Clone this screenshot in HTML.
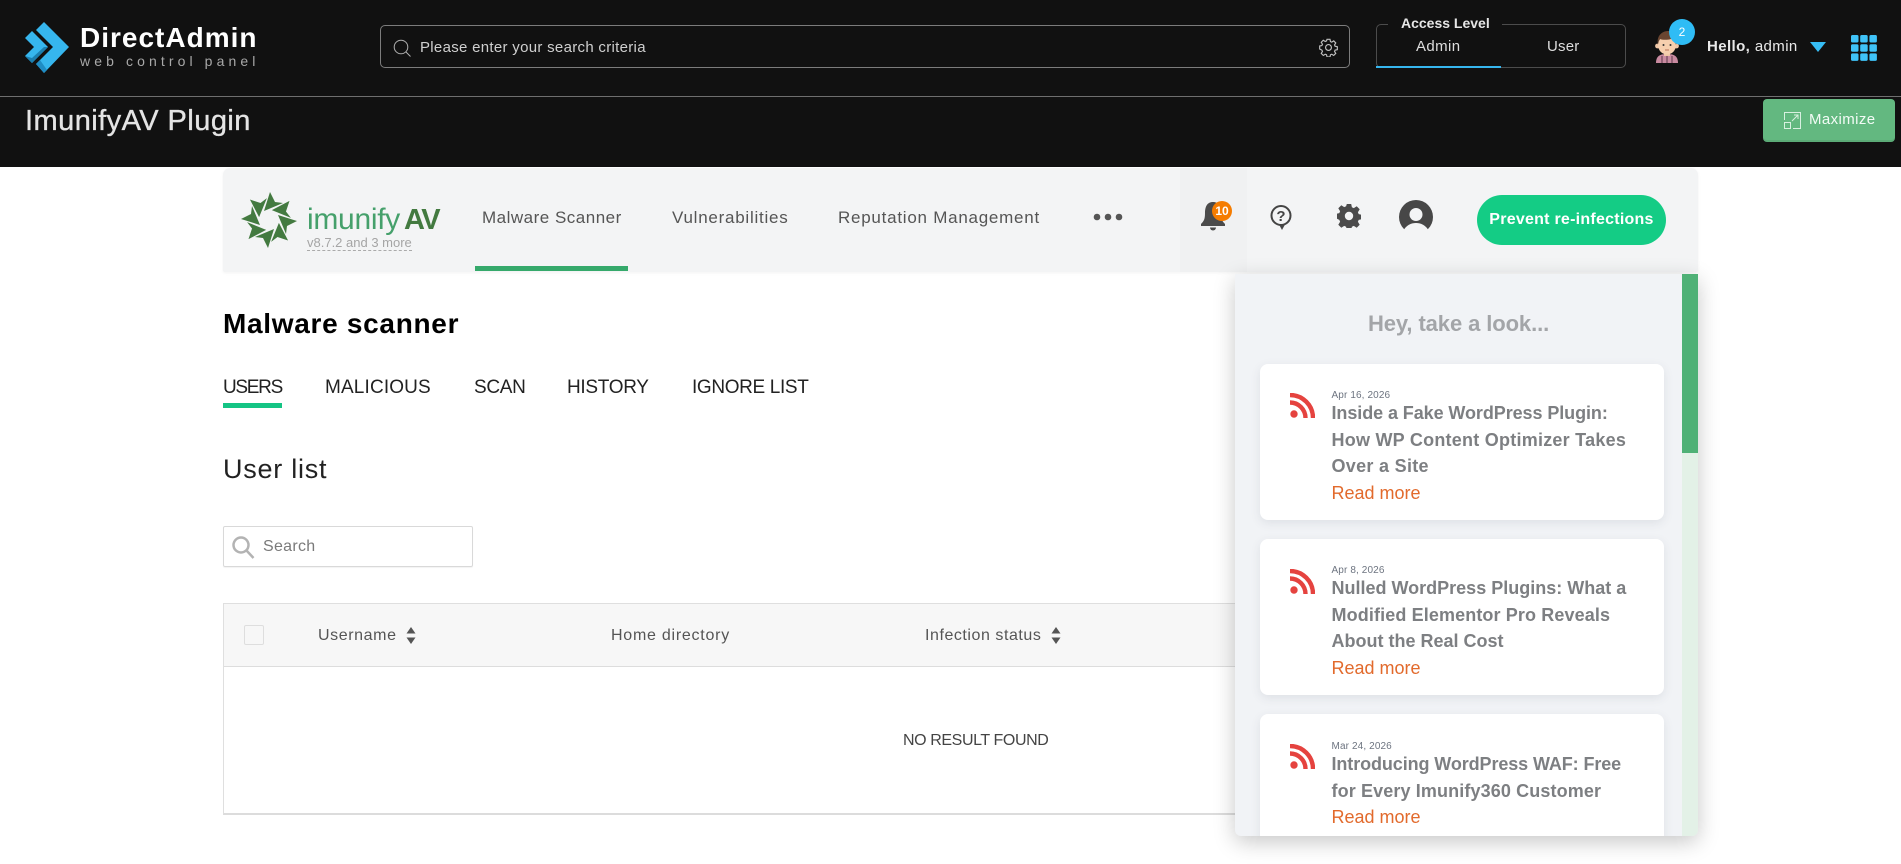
<!DOCTYPE html>
<html lang="en"><head><meta charset="utf-8"><title>ImunifyAV Plugin</title>
<style>
html,body{margin:0;padding:0;width:1901px;height:864px;overflow:hidden;background:#fff;font-family:"Liberation Sans",Arial,sans-serif}
*{box-sizing:border-box}
.a{position:absolute}
.t{position:absolute;white-space:nowrap;line-height:20px;height:20px}
svg{position:absolute;display:block}
.card{position:absolute;left:25px;width:404px;background:#fff;border-radius:8px;box-shadow:0 3px 10px rgba(60,70,90,.1)}
.d{position:absolute;left:71.500px;font-size:10px;line-height:12px;color:#6d7480;white-space:nowrap;letter-spacing:.12px}
.h{position:absolute;left:71.500px;font-size:18px;line-height:26.6px;font-weight:bold;color:#7d7f82;white-space:nowrap}
.r{position:absolute;left:71.500px;font-size:18px;line-height:26px;color:#e26a2c;white-space:nowrap}
.tb{font-size:19px;color:#222;top:378px}
.th{font-size:16px;color:#555;top:626px}
.n{font-size:17px;color:#555;top:208px}
</style></head>
<body>
<div class="a" style="left:0;top:0;width:1901px;height:167px;background:#111"></div>
<div class="a" style="left:0;top:96px;width:1901px;height:1px;background:#6f6f6f"></div>

<svg style="left:20px;top:17px" width="54" height="60" viewBox="20 17 54 60">
<polygon points="25,38 32,31 48,47 32,63 25,56 34,47" fill="#36b6ee"/>
<polygon points="25,56 32,63 48,47 44,47 32,58" fill="#1b7fb0"/>
<polygon points="44,22 69,47 44,73 36,64 53,47 36,30" fill="#36b6ee"/>
<polygon points="36,64 44,73 47,70 40,60" fill="#1f8cc4"/>
</svg>
<div class="t" style="left:80px;top:28px;font-size:28px;font-weight:bold;color:#fff;letter-spacing:1px">DirectAdmin</div>
<div class="t" style="left:80px;top:51px;font-size:14px;color:#a8a8a8;letter-spacing:4.100px">web control panel</div>

<div class="a" style="left:380px;top:25px;width:970px;height:43px;border:1px solid #7c7c7c;border-radius:5px"></div>
<svg style="left:392px;top:38px" width="20" height="20" viewBox="0 0 20 20" fill="none" stroke="#b0b0b0" stroke-width="1"><circle cx="9" cy="9" r="6.800"/><path d="M14 14l4.500 4.500"/></svg>
<div class="t" style="left:420px;top:38px;font-size:15px;color:#cfcfcf;letter-spacing:.3px">Please enter your search criteria</div>
<svg style="left:1319px;top:38px" width="19" height="19" viewBox="-2 -2 28 28"><path fill="none" stroke="#c0c0c0" stroke-width="1.700" d="M9.800 0h4.400l.7 3.300 1.900.8L19.700 2.300l3 3-1.800 2.900.8 1.900 3.300.7v4.400l-3.300.7-.8 1.900 1.800 2.900-3 3-2.900-1.800-1.900.8-.7 3.300H9.800l-.7-3.300-1.900-.8-2.900 1.800-3-3 1.800-2.900-.8-1.900L-1 14.200V9.800l3.300-.7.8-1.900L1.300 4.300l3-3 2.900 1.800 1.900-.8z"/><circle cx="12" cy="12" r="4.300" fill="none" stroke="#c0c0c0" stroke-width="1.700"/></svg>

<div class="a" style="left:1376px;top:24px;width:250px;height:44px;border:1px solid #4c4c4c;border-radius:5px"></div>
<div class="a" style="left:1388px;top:20px;width:114px;height:8px;background:#111"></div>
<div class="t" style="left:1401px;top:13px;font-size:14px;font-weight:bold;color:#e6e6e6">Access Level</div>
<div class="t" style="left:1416px;top:37px;font-size:15px;color:#ddd;letter-spacing:.4px">Admin</div>
<div class="t" style="left:1547px;top:37px;font-size:15px;color:#ddd;letter-spacing:.2px">User</div>
<div class="a" style="left:1376px;top:66px;width:125px;height:2px;background:#36b6ee"></div>

<svg style="left:1654px;top:30px" width="26" height="34" viewBox="0 0 26 34">
<path d="M2 33c0-7 4-9 11-9s11 2 11 9z" fill="#c98aa0"/><path d="M8 26v7M13 25v8M18 26v7" stroke="#5d3a4a" stroke-width="1"/>
<rect x="10" y="20" width="6" height="6" fill="#efc6a6"/>
<circle cx="3.500" cy="16" r="2.400" fill="#efc6a6"/><circle cx="22.500" cy="16" r="2.400" fill="#efc6a6"/>
<ellipse cx="13" cy="15" rx="9" ry="9.500" fill="#f6cfae"/>
<path d="M4 15c-2-10 5-14 10-14s10 4 8 14c-1-4-3-6-5-6-3 1-9 1-11 0-1 1-2 3-2 6z" fill="#6a4530"/>
<circle cx="9.500" cy="15" r="1" fill="#333"/><circle cx="16.500" cy="15" r="1" fill="#333"/><path d="M11 20h4" stroke="#b8735a"/>
</svg>
<div class="a" style="left:1669px;top:19px;width:26px;height:26px;border-radius:50%;background:#2fbcf5;color:#fff;font-size:12px;line-height:26px;text-align:center">2</div>
<div class="t" style="left:1707px;top:37px;font-size:15px;color:#e8e8e8;letter-spacing:.4px"><b>Hello,</b> admin</div>
<svg style="left:1809px;top:41px" width="18" height="12" viewBox="0 0 18 12"><path d="M1 1h16L9 11z" fill="#36bdf5"/></svg>
<svg style="left:1851px;top:35px" width="26" height="26" viewBox="0 0 26 26" fill="#3fc3f8">
<rect width="7.500" height="7.500" rx="1.500"/><rect x="9.200" width="7.500" height="7.500" rx="1.500"/><rect x="18.400" width="7.500" height="7.500" rx="1.500"/>
<rect y="9.200" width="7.500" height="7.500" rx="1.500"/><rect x="9.200" y="9.200" width="7.500" height="7.500" rx="1.500"/><rect x="18.400" y="9.200" width="7.500" height="7.500" rx="1.500"/>
<rect y="18.400" width="7.500" height="7.500" rx="1.500"/><rect x="9.200" y="18.400" width="7.500" height="7.500" rx="1.500"/><rect x="18.400" y="18.400" width="7.500" height="7.500" rx="1.500"/></svg>

<div class="t" style="left:25px;top:110px;font-size:29px;line-height:22px;height:22px;color:#e4e4e4;letter-spacing:.45px;-webkit-text-stroke:.35px #e4e4e4">ImunifyAV Plugin</div>
<div class="a" style="left:1763px;top:99px;width:132px;height:43px;background:#63b880;border-radius:4px;box-shadow:inset 0 -2px 0 rgba(0,0,0,.07)"></div>
<svg style="left:1783px;top:111px" width="20" height="19" viewBox="0 0 20 19" fill="none" stroke="#d8f0e0" stroke-width="1"><path d="M1.500 9V1.500h16V17.500H10M9 10l6-6M11 4h4v4"/><rect x="1.500" y="11.500" width="6" height="6"/></svg>
<div class="t" style="left:1809px;top:110px;font-size:15px;color:#f2fbf5;letter-spacing:.4px">Maximize</div>

<!-- nav -->
<div class="a" style="left:223px;top:168px;width:1475px;height:104px;background:#f3f4f5;border-radius:7px 7px 2px 2px;box-shadow:0 1px 3px rgba(0,0,0,.05)"></div>
<div class="a" style="left:1180px;top:168px;width:67px;height:104px;background:#f0f1f2"></div>
<svg style="left:238px;top:190px" width="62" height="60" viewBox="-31 -30 62 60" fill="#437a40">
<polygon points="1,-28 -5,-9 14,-17 6,-18"/>
<polygon points="1,-28 -5,-9 14,-17 6,-18" transform="rotate(45)"/><polygon points="1,-28 -5,-9 14,-17 6,-18" transform="rotate(90)"/><polygon points="1,-28 -5,-9 14,-17 6,-18" transform="rotate(135)"/><polygon points="1,-28 -5,-9 14,-17 6,-18" transform="rotate(180)"/><polygon points="1,-28 -5,-9 14,-17 6,-18" transform="rotate(225)"/><polygon points="1,-28 -5,-9 14,-17 6,-18" transform="rotate(270)"/><polygon points="1,-28 -5,-9 14,-17 6,-18" transform="rotate(315)"/></svg>
<div class="t" style="left:307px;top:208px;font-size:30px;line-height:24px;height:24px;color:#45a06b;letter-spacing:-.3px">imunify</div>
<div class="t" style="left:404px;top:208px;font-size:29px;line-height:24px;height:24px;color:#437a40;font-weight:bold;letter-spacing:-1.500px">AV</div>
<div class="t" style="left:307px;top:234px;font-size:13px;color:#a5a5a5;border-bottom:1px dashed #aaa;height:17px;line-height:17px">v8.7.2 and 3 more</div>
<div class="t n" style="left:482px;letter-spacing:.5px">Malware Scanner</div>
<div class="t n" style="left:672px;letter-spacing:.75px">Vulnerabilities</div>
<div class="t n" style="left:838px;letter-spacing:.75px">Reputation Management</div>
<svg style="left:1092px;top:212px" width="32" height="10" viewBox="0 0 32 10" fill="#555"><circle cx="5" cy="5" r="3.300"/><circle cx="16" cy="5" r="3.300"/><circle cx="27" cy="5" r="3.300"/></svg>
<div class="a" style="left:475px;top:266px;width:153px;height:5px;background:#35a96b"></div>

<svg style="left:1200px;top:201px" width="26" height="30" viewBox="0 0 26 30" fill="#4b4b4b"><path d="M13 1c-6 0-8 5-8 11 0 6-1 8-4 11v2h24v-2c-3-3-4-5-4-11 0-6-2-11-8-11z"/><path d="M10 26.500h6a3 3 0 0 1-6 0z"/></svg>
<div class="a" style="left:1212px;top:201px;width:20px;height:20px;border-radius:50%;background:#f57c00;color:#fff;font-size:12px;font-weight:bold;line-height:20px;text-align:center">10</div>
<svg style="left:1270px;top:204px" width="22" height="27" viewBox="0 0 22 27"><circle cx="11" cy="11.500" r="9.500" fill="none" stroke="#444" stroke-width="2"/><path d="M9 20.500h6l-3 5.500z" fill="#444"/><text x="11" y="17" font-family="Liberation Sans,sans-serif" font-size="15" font-weight="bold" fill="#444" text-anchor="middle">?</text></svg>
<svg style="left:1337px;top:204px" width="24" height="24" viewBox="0 0 24 24"><path fill="#4b4b4b" fill-rule="evenodd" d="M9.800 0h4.400l.7 3.300 1.900.8L19.700 2.300l3 3-1.800 2.900.8 1.900 3.300.7v4.400l-3.300.7-.8 1.900 1.800 2.900-3 3-2.900-1.800-1.900.8-.7 3.300H9.800l-.7-3.300-1.900-.8-2.900 1.800-3-3 1.800-2.900-.8-1.900L-1 14.200V9.800l3.300-.7.8-1.900L1.300 4.300l3-3 2.900 1.800 1.900-.8zM12 7.800a4.200 4.200 0 1 0 0 8.400 4.200 4.200 0 0 0 0-8.400z"/></svg>
<svg style="left:1399px;top:200px" width="34" height="35" viewBox="0 0 34 35"><circle cx="17" cy="17" r="17" fill="#474747"/><circle cx="17" cy="14.500" r="6.500" fill="#f3f4f5"/><path d="M5 29.500C8 25 12 23 17 23s9 2 12 6.500V35H5z" fill="#f3f4f5"/></svg>
<div class="a" style="left:1477px;top:195px;width:189px;height:50px;border-radius:25px;background:#14cc85;color:#fff;font-size:16px;font-weight:bold;line-height:50px;text-align:center;letter-spacing:.25px">Prevent re-infections</div>

<!-- main -->
<div class="t" style="left:223px;top:313px;font-size:28px;line-height:22px;height:22px;font-weight:bold;color:#000;letter-spacing:.7px">Malware scanner</div>
<div class="t tb" style="left:223px;letter-spacing:-1.300px">USERS</div>
<div class="t tb" style="left:325px;letter-spacing:.15px">MALICIOUS</div>
<div class="t tb" style="left:474px;letter-spacing:-.3px">SCAN</div>
<div class="t tb" style="left:567px;letter-spacing:-.3px">HISTORY</div>
<div class="t tb" style="left:692px;letter-spacing:-.35px">IGNORE LIST</div>
<div class="a" style="left:223px;top:403px;width:59px;height:5px;background:#14c484"></div>
<div class="t" style="left:223px;top:458px;font-size:27px;line-height:22px;height:22px;color:#222;letter-spacing:.75px">User list</div>

<div class="a" style="left:223px;top:526px;width:250px;height:41px;border:1px solid #d9d9d9;border-radius:2px;box-shadow:0 1px 1px rgba(0,0,0,.05)"></div>
<svg style="left:231px;top:535px" width="24" height="24" viewBox="0 0 24 24" fill="none" stroke="#b3b3b3" stroke-width="2.500"><circle cx="10" cy="10" r="7.500"/><path d="M15.500 15.500l7 7.500"/></svg>
<div class="t" style="left:263px;top:537px;font-size:16px;color:#7a7a7a;letter-spacing:.3px">Search</div>

<div class="a" style="left:223px;top:603px;width:1475px;height:212px;border:1px solid #dfdfdf;border-bottom:2px solid #dcdcdc;background:#fff"></div>
<div class="a" style="left:224px;top:604px;width:1473px;height:63px;background:#f7f7f7;border-bottom:1px solid #ddd"></div>
<div class="a" style="left:244px;top:625px;width:20px;height:20px;border:1px solid #dedede;border-radius:2px"></div>
<div class="t th" style="left:318px;letter-spacing:.6px">Username</div>
<svg style="left:405px;top:627px" width="12" height="17" viewBox="0 0 12 17" fill="#555"><path d="M6 0l4.500 6.500h-9zM6 17l4.500-6.500h-9z"/></svg>
<div class="t th" style="left:611px;letter-spacing:.75px">Home directory</div>
<div class="t th" style="left:925px;letter-spacing:.55px">Infection status</div>
<svg style="left:1050px;top:627px" width="12" height="17" viewBox="0 0 12 17" fill="#555"><path d="M6 0l4.500 6.500h-9zM6 17l4.500-6.500h-9z"/></svg>
<div class="t" style="left:903px;top:731px;font-size:16px;color:#444;letter-spacing:-.4px">NO RESULT FOUND</div>

<!-- panel -->
<div class="a" style="left:1235px;top:274px;width:463px;height:562px;background:#f1f3f6;box-shadow:0 6px 22px rgba(0,0,0,.22);border-radius:0 0 6px 6px;overflow:hidden">
<div class="a" style="left:447px;top:0;width:16px;height:562px;background:#e3f1e7"></div>
<div class="a" style="left:447px;top:0;width:16px;height:179px;background:#4fb176"></div>
<div class="t" style="left:133px;top:39px;font-size:22px;line-height:22px;height:22px;color:#a3a5a8;font-weight:bold;letter-spacing:-.1px">Hey, take a look...</div>

<div class="card" style="top:90px;height:156px">
<svg style="left:30px;top:29px" width="25" height="25" viewBox="0 0 25 25"><circle cx="4" cy="21" r="3.700" fill="#e5433f"/><path d="M0 9.500a15.500 15.500 0 0 1 15.500 15.500M0 2a23 23 0 0 1 23 23" fill="none" stroke="#e5433f" stroke-width="4.400"/></svg>
<div class="d" style="top:26px">Apr 16, 2026</div>
<div class="h" style="top:36px"><span style="letter-spacing:-.08px">Inside a Fake WordPress Plugin:</span><br><span style="letter-spacing:.24px">How WP Content Optimizer Takes</span><br><span style="letter-spacing:.3px">Over a Site</span></div>
<div class="r" style="top:116px">Read more</div>
</div>

<div class="card" style="top:265px;height:156px">
<svg style="left:30px;top:30px" width="25" height="25" viewBox="0 0 25 25"><circle cx="4" cy="21" r="3.700" fill="#e5433f"/><path d="M0 9.500a15.500 15.500 0 0 1 15.500 15.500M0 2a23 23 0 0 1 23 23" fill="none" stroke="#e5433f" stroke-width="4.400"/></svg>
<div class="d" style="top:26px">Apr 8, 2026</div>
<div class="h" style="top:36px">Nulled WordPress Plugins: What a<br><span style="letter-spacing:.12px">Modified Elementor Pro Reveals</span><br>About the Real Cost</div>
<div class="r" style="top:116px">Read more</div>
</div>

<div class="card" style="top:440px;height:140px">
<svg style="left:30px;top:30px" width="25" height="25" viewBox="0 0 25 25"><circle cx="4" cy="21" r="3.700" fill="#e5433f"/><path d="M0 9.500a15.500 15.500 0 0 1 15.500 15.500M0 2a23 23 0 0 1 23 23" fill="none" stroke="#e5433f" stroke-width="4.400"/></svg>
<div class="d" style="top:27px">Mar 24, 2026</div>
<div class="h" style="top:37px"><span style="letter-spacing:-.1px">Introducing WordPress WAF: Free</span><br><span style="letter-spacing:.12px">for Every Imunify360 Customer</span></div>
<div class="r" style="top:90px">Read more</div>
</div>
</div>
</body></html>
